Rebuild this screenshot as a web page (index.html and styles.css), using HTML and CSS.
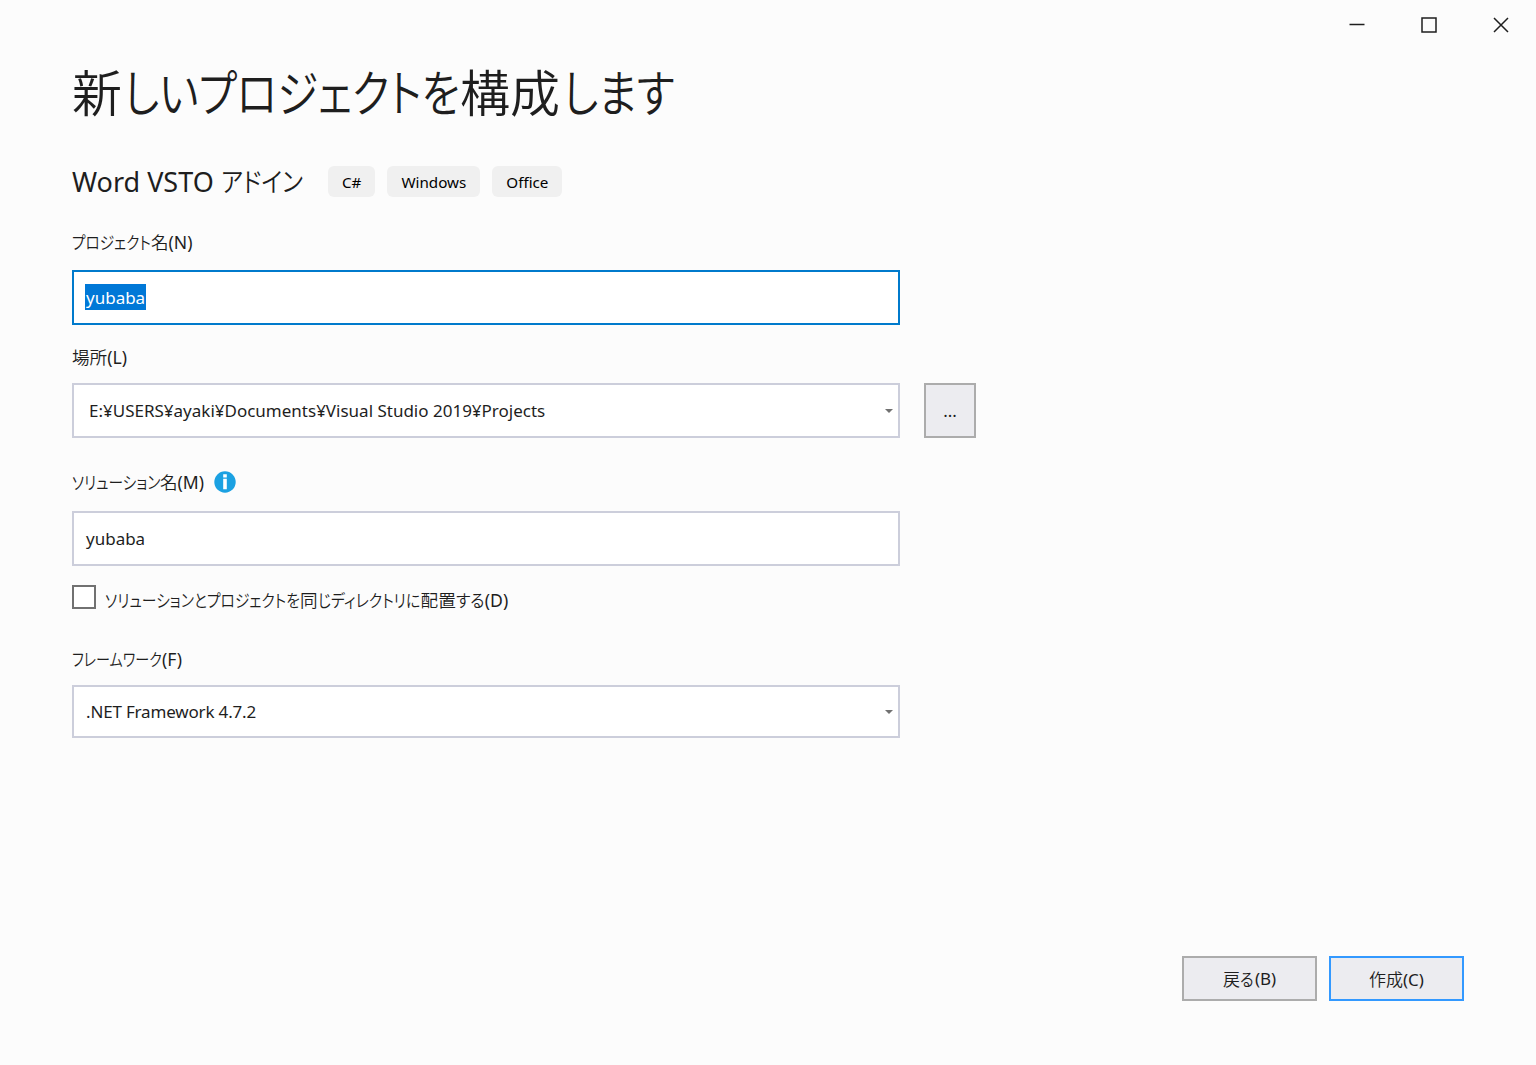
FILE: index.html
```html
<!DOCTYPE html>
<html lang="ja">
<head>
    <meta charset="UTF-8">
    <meta name="viewport" content="width=device-width, initial-scale=1.0">
    <title>新しいプロジェクトを構成します</title>
    <link rel="stylesheet" href="styles.css">
</head>
<body>

    <div class="titlebar">
        <svg class="win-btn" viewBox="0 0 72 50"><path d="M13.5 24.5h15"/></svg>
        <svg class="win-btn" viewBox="0 0 72 50"><rect x="14" y="18" width="14" height="14"/></svg>
        <svg class="win-btn" viewBox="0 0 72 50"><path d="M14 18l14 14M28 18l-14 14"/></svg>
    </div>

    <main class="content">
        <h1 class="title">新<span class="kana title-mid">しいプロジェクトを</span>構成<span class="kana title-end">します</span></h1>

        <div class="template">
            <h2 class="template-name">Word VSTO <span class="kana addin">アドイン</span></h2>
            <span class="tag">C#</span>
            <span class="tag">Windows</span>
            <span class="tag">Office</span>
        </div>

        <div class="label"><span class="kana k-project">プロジェクト</span>名(N)</div>
        <div class="field active"><span class="selected">yubaba</span></div>

        <div class="label location-label">場所(L)</div>
        <div class="row">
            <div class="field location">E:¥USERS¥ayaki¥Documents¥Visual Studio 2019¥Projects<i class="arrow"></i></div>
            <button class="btn browse">...</button>
        </div>

        <div class="label solution-label">
            <span class="kana k-solution">ソリューション</span>名(M)
            <svg class="info" viewBox="0 0 22 22">
                <circle cx="11" cy="11" r="10.7" fill="#1ba1e2"/>
                <path d="M9.2 3.2h3.6v3.2H9.2zM9.2 7.8h3.6v10.4H9.2z" fill="#fff"/>
            </svg>
        </div>
        <div class="field">yubaba</div>

        <div class="check-row">
            <span class="checkbox"></span>
            <div class="label check-label"><span class="kana k-check1">ソリューションとプロジェクトを</span>同<span class="kana k-check2">じディレクトリに</span>配置<span class="kana k-check3">する</span>(D)</div>
        </div>

        <div class="label framework-label"><span class="kana k-framework">フレームワーク</span>(F)</div>
        <div class="field framework">.NET Framework 4.7.2<i class="arrow"></i></div>
    </main>

    <div class="footer">
        <button class="btn">戻<span class="kana k-back">る</span>(B)</button>
        <button class="btn primary">作成(C)</button>
    </div>

</body>
</html>
```
FILE: styles.css
```css
* {
    box-sizing: border-box;
}
body {
    margin: 0;
    height: 1065px;
    background-color: #fcfcfc;
    color: #1e1e1e;
    font-family: "Noto Sans", "Noto Sans CJK JP DemiLight", "Noto Sans CJK JP", sans-serif;
    font-size: 17px;
    display: flex;
    flex-direction: column;
    overflow: hidden;
}
.titlebar {
    display: flex;
    justify-content: flex-end;
    height: 50px;
    margin-right: -16px;
}
.win-btn {
    width: 72px;
    height: 50px;
    fill: none;
    stroke: #1e1e1e;
    stroke-width: 1.5;
}
.content {
    flex: 1;
    padding-left: 72px;
}
/* narrow kana, as in the Windows UI fonts */
.kana {
    display: inline-block;
    white-space: nowrap;
    font-feature-settings: "palt";
    transform: scaleX(0.82);
    transform-origin: left;
}
.title {
    display: flex;
    margin: 4px 0 0;
    height: 72px;
    line-height: 72px;
    font-family: "Noto Sans CJK JP", sans-serif;
    font-size: 50px;
    font-weight: 350;
}
.title-mid {
    width: 334px;
    margin: 0 2px;
    transform: scaleX(0.832);
}
.title-end {
    width: 112px;
    margin-left: 3px;
    transform: scaleX(0.835);
}
.template {
    display: flex;
    align-items: center;
    gap: 12px;
    height: 32px;
    margin-top: 39px;
}
.template-name {
    width: 244px;
    margin: 0;
    padding-top: 1px;
    font-size: 27px;
    line-height: 32px;
    font-weight: 400;
    white-space: nowrap;
}
.addin {
    font-weight: 350;
    transform: scaleX(0.87);
}
.tag {
    height: 31px;
    padding: 0 14px;
    border-radius: 6px;
    background-color: #f0f0f0;
    color: #000;
    font-size: 15.2px;
    line-height: 32px;
}
.label {
    display: flex;
    align-items: center;
    height: 26px;
    margin: 32px 0 15px;
    font-size: 17.6px;
    line-height: 26px;
}
.k-project { width: 79px; transform: scaleX(0.835); }
.k-solution { width: 88px; transform: scaleX(0.835); }
.k-framework { width: 90px; transform: scaleX(0.8); }
.k-check1 { width: 195px; transform: scaleX(0.84); }
.k-check2 { width: 103px; transform: scaleX(0.85); }
.k-check3 { width: 29px; transform: scaleX(0.9); }
.k-back { width: 15px; transform: scaleX(0.9); }
.location-label {
    margin: 19px 0 13px;
}
.solution-label {
    margin: 31px 0 16px;
}
.framework-label {
    margin: 33px 0 13px;
}
.field {
    display: flex;
    align-items: center;
    width: 828px;
    height: 55px;
    padding: 0 5px 0 12px;
    border: 2px solid #cccedb;
    background-color: #fff;
}
.field.active {
    padding: 0 11px 1px;
    border-color: #007acc;
}
.location {
    padding-left: 15px;
}
.framework {
    height: 53px;
    letter-spacing: -0.17px;
}
.selected {
    height: 26px;
    padding: 0 1px;
    background-color: #0078d7;
    color: #fff;
    line-height: 27px;
}
.arrow {
    margin-left: auto;
    border: 4.5px solid transparent;
    border-top-color: #717171;
    border-bottom: 0;
}
.row {
    display: flex;
    gap: 24px;
}
.info {
    width: 22px;
    height: 22px;
    margin-left: 10px;
}
.check-row {
    display: flex;
    margin-top: 19px;
}
.checkbox {
    width: 24px;
    height: 24px;
    border: 2px solid #717171;
    background-color: #fff;
}
.check-label {
    margin: 2px 0 0 9px;
}
.btn {
    display: flex;
    align-items: center;
    justify-content: center;
    width: 135px;
    height: 45px;
    padding: 0;
    border: 2px solid #acacac;
    background-color: #ececf0;
    color: #1e1e1e;
    font: inherit;
}
.browse {
    width: 52px;
    height: 55px;
}
.primary {
    border-color: #3399ff;
}
.footer {
    display: flex;
    justify-content: flex-end;
    gap: 12px;
    padding: 0 72px 64px 0;
}
```
